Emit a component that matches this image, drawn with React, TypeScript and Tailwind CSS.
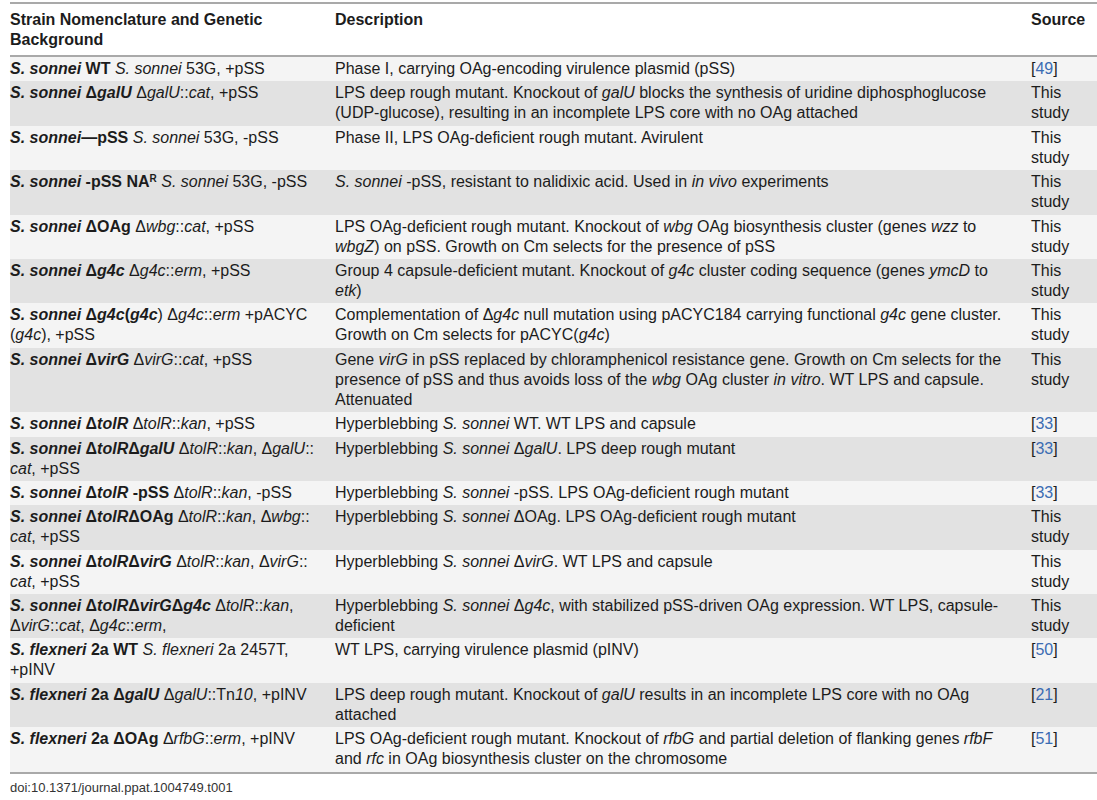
import React from "react";

type Row = { a: React.ReactNode; b: React.ReactNode; c: React.ReactNode };

const I = ({ children }: { children: React.ReactNode }) => <i>{children}</i>;
const Ref = ({ n }: { n: string }) => (
  <span>
    [<span className="text-[#3b6cb3]">{n}</span>]
  </span>
);
const TS = (
  <>
    This
    <br />
    study
  </>
);

const rows: Row[] = [
  {
    a: (
      <>
        <b>
          <I>S. sonnei</I> WT
        </b>{" "}
        <I>S. sonnei</I> 53G, +pSS
      </>
    ),
    b: <>Phase I, carrying OAg-encoding virulence plasmid (pSS)</>,
    c: <Ref n="49" />,
  },
  {
    a: (
      <>
        <b>
          <I>S. sonnei</I> Δ<I>galU</I>
        </b>{" "}
        Δ<I>galU</I>::<I>cat</I>, +pSS
      </>
    ),
    b: (
      <>
        LPS deep rough mutant. Knockout of <I>galU</I> blocks the synthesis of uridine diphosphoglucose
        <br />
        (UDP-glucose), resulting in an incomplete LPS core with no OAg attached
      </>
    ),
    c: TS,
  },
  {
    a: (
      <>
        <b>
          <I>S. sonnei</I>—pSS
        </b>{" "}
        <I>S. sonnei</I> 53G, -pSS
      </>
    ),
    b: <>Phase II, LPS OAg-deficient rough mutant. Avirulent</>,
    c: TS,
  },
  {
    a: (
      <>
        <b>
          <I>S. sonnei</I> -pSS NA<sup className="text-[10px]">R</sup>
        </b>{" "}
        <I>S. sonnei</I> 53G, -pSS
      </>
    ),
    b: (
      <>
        <I>S. sonnei</I> -pSS, resistant to nalidixic acid. Used in <I>in vivo</I> experiments
      </>
    ),
    c: TS,
  },
  {
    a: (
      <>
        <b>
          <I>S. sonnei</I> ΔOAg
        </b>{" "}
        Δ<I>wbg</I>::<I>cat</I>, +pSS
      </>
    ),
    b: (
      <>
        LPS OAg-deficient rough mutant. Knockout of <I>wbg</I> OAg biosynthesis cluster (genes <I>wzz</I> to
        <br />
        <I>wbgZ</I>) on pSS. Growth on Cm selects for the presence of pSS
      </>
    ),
    c: TS,
  },
  {
    a: (
      <>
        <b>
          <I>S. sonnei</I> Δ<I>g4c</I>
        </b>{" "}
        Δ<I>g4c</I>::<I>erm</I>, +pSS
      </>
    ),
    b: (
      <>
        Group 4 capsule-deficient mutant. Knockout of <I>g4c</I> cluster coding sequence (genes <I>ymcD</I> to
        <br />
        <I>etk</I>)
      </>
    ),
    c: TS,
  },
  {
    a: (
      <>
        <b>
          <I>S. sonnei</I> Δ<I>g4c</I>(<I>g4c</I>
        </b>
        ) Δ<I>g4c</I>::<I>erm</I> +pACYC
        <br />(<I>g4c</I>), +pSS
      </>
    ),
    b: (
      <>
        Complementation of Δ<I>g4c</I> null mutation using pACYC184 carrying functional <I>g4c</I> gene cluster.
        <br />
        Growth on Cm selects for pACYC(<I>g4c</I>)
      </>
    ),
    c: TS,
  },
  {
    a: (
      <>
        <b>
          <I>S. sonnei</I> Δ<I>virG</I>
        </b>{" "}
        Δ<I>virG</I>::<I>cat</I>, +pSS
      </>
    ),
    b: (
      <>
        Gene <I>virG</I> in pSS replaced by chloramphenicol resistance gene. Growth on Cm selects for the
        <br />
        presence of pSS and thus avoids loss of the <I>wbg</I> OAg cluster <I>in vitro</I>. WT LPS and capsule.
        <br />
        Attenuated
      </>
    ),
    c: TS,
  },
  {
    a: (
      <>
        <b>
          <I>S. sonnei</I> Δ<I>tolR</I>
        </b>{" "}
        Δ<I>tolR</I>::<I>kan</I>, +pSS
      </>
    ),
    b: (
      <>
        Hyperblebbing <I>S. sonnei</I> WT. WT LPS and capsule
      </>
    ),
    c: <Ref n="33" />,
  },
  {
    a: (
      <>
        <b>
          <I>S. sonnei</I> Δ<I>tolR</I>Δ<I>galU</I>
        </b>{" "}
        Δ<I>tolR</I>::<I>kan</I>, Δ<I>galU</I>::
        <br />
        <I>cat</I>, +pSS
      </>
    ),
    b: (
      <>
        Hyperblebbing <I>S. sonnei</I> Δ<I>galU</I>. LPS deep rough mutant
      </>
    ),
    c: <Ref n="33" />,
  },
  {
    a: (
      <>
        <b>
          <I>S. sonnei</I> Δ<I>tolR</I> -pSS
        </b>{" "}
        Δ<I>tolR</I>::<I>kan</I>, -pSS
      </>
    ),
    b: (
      <>
        Hyperblebbing <I>S. sonnei</I> -pSS. LPS OAg-deficient rough mutant
      </>
    ),
    c: <Ref n="33" />,
  },
  {
    a: (
      <>
        <b>
          <I>S. sonnei</I> Δ<I>tolR</I>ΔOAg
        </b>{" "}
        Δ<I>tolR</I>::<I>kan</I>, Δ<I>wbg</I>::
        <br />
        <I>cat</I>, +pSS
      </>
    ),
    b: (
      <>
        Hyperblebbing <I>S. sonnei</I> ΔOAg. LPS OAg-deficient rough mutant
      </>
    ),
    c: TS,
  },
  {
    a: (
      <>
        <b>
          <I>S. sonnei</I> Δ<I>tolR</I>Δ<I>virG</I>
        </b>{" "}
        Δ<I>tolR</I>::<I>kan</I>, Δ<I>virG</I>::
        <br />
        <I>cat</I>, +pSS
      </>
    ),
    b: (
      <>
        Hyperblebbing <I>S. sonnei</I> Δ<I>virG</I>. WT LPS and capsule
      </>
    ),
    c: TS,
  },
  {
    a: (
      <>
        <b>
          <I>S. sonnei</I> Δ<I>tolR</I>Δ<I>virG</I>Δ<I>g4c</I>
        </b>{" "}
        Δ<I>tolR</I>::<I>kan</I>,
        <br />Δ<I>virG</I>::<I>cat</I>, Δ<I>g4c</I>::<I>erm</I>,
      </>
    ),
    b: (
      <>
        Hyperblebbing <I>S. sonnei</I> Δ<I>g4c</I>, with stabilized pSS-driven OAg expression. WT LPS, capsule-
        <br />
        deficient
      </>
    ),
    c: TS,
  },
  {
    a: (
      <>
        <b>
          <I>S. flexneri</I> 2a WT
        </b>{" "}
        <I>S. flexneri</I> 2a 2457T,
        <br />
        +pINV
      </>
    ),
    b: <>WT LPS, carrying virulence plasmid (pINV)</>,
    c: <Ref n="50" />,
  },
  {
    a: (
      <>
        <b>
          <I>S. flexneri</I> 2a Δ<I>galU</I>
        </b>{" "}
        Δ<I>galU</I>::Tn<I>10</I>, +pINV
      </>
    ),
    b: (
      <>
        LPS deep rough mutant. Knockout of <I>galU</I> results in an incomplete LPS core with no OAg
        <br />
        attached
      </>
    ),
    c: <Ref n="21" />,
  },
  {
    a: (
      <>
        <b>
          <I>S. flexneri</I> 2a ΔOAg
        </b>{" "}
        Δ<I>rfbG</I>::<I>erm</I>, +pINV
      </>
    ),
    b: (
      <>
        LPS OAg-deficient rough mutant. Knockout of <I>rfbG</I> and partial deletion of flanking genes <I>rfbF</I>
        <br />
        and <I>rfc</I> in OAg biosynthesis cluster on the chromosome
      </>
    ),
    c: <Ref n="51" />,
  },
];

export default function App() {
  return (
    <div className="w-[1097px] h-[800px] overflow-hidden bg-white pt-[2px] font-['Liberation_Sans',Arial,sans-serif] text-[#1c1c1c]">
      <div className="ml-[10px] w-[1087px]">
        <div className="border-t-2 border-b-2 border-[#a9a9a9]">
          <div className="grid grid-cols-[325px_696px_66px] pt-[6px] pb-[5px] text-[16px] leading-[20px] font-bold bg-white">
            <div>
              Strain Nomenclature and Genetic
              <br />
              Background
            </div>
            <div>Description</div>
            <div>Source</div>
          </div>
        </div>
        <div className="border-b-2 border-[#a9a9a9]">
          {rows.map((r, i) => (
            <div
              key={i}
              className={
                "grid grid-cols-[325px_696px_66px] pt-[2px] pb-[2.4px] text-[16px] leading-[20px] whitespace-nowrap " +
                (i % 2 === 0 ? "bg-[#f4f4f4]" : "bg-[#e2e2e2]")
              }
            >
              <div>{r.a}</div>
              <div>{r.b}</div>
              <div>{r.c}</div>
            </div>
          ))}
        </div>
        <div className="mt-[6px] text-[13px] leading-[16px] text-[#333]">doi:10.1371/journal.ppat.1004749.t001</div>
      </div>
    </div>
  );
}
